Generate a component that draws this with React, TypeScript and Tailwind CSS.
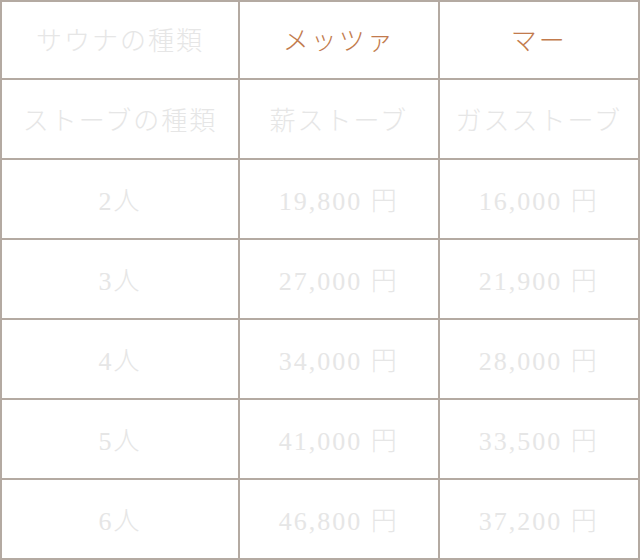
const rows: [string, string, string][] = [
  ["ストーブの種類", "薪ストーブ", "ガスストーブ"],
  ["2人", "19,800 円", "16,000 円"],
  ["3人", "27,000 円", "21,900 円"],
  ["4人", "34,000 円", "28,000 円"],
  ["5人", "41,000 円", "33,500 円"],
  ["6人", "46,800 円", "37,200 円"],
];

const cell = "border-2 border-[#b4aaa2] text-center align-middle";

export default function App() {
  return (
    <div className="w-[640px] h-[560px] bg-white">
      <table
        className="w-[640px] border-collapse text-[26px] font-light tracking-[2px] text-[#e6e6e6]"
        style={{ fontFamily: '"Liberation Serif", "Noto Sans CJK JP", serif' }}
      >
        <colgroup>
          <col className="w-[239px]" />
          <col className="w-[200px]" />
          <col className="w-[201px]" />
        </colgroup>
        <thead>
          <tr className="h-[78px]">
            <th className={`${cell} pt-[2px] font-light`}>サウナの種類</th>
            <th className={`${cell} pt-[2px] font-light text-[#c27b4d]`}>メッツァ</th>
            <th className={`${cell} pt-[2px] font-light text-[#c27b4d]`}>マー</th>
          </tr>
        </thead>
        <tbody>
          {rows.map((r) => (
            <tr key={r[0]} className="h-[80px]">
              <td className={`${cell} pt-[4px]`}>{r[0]}</td>
              <td className={`${cell} pt-[4px]`}>{r[1]}</td>
              <td className={`${cell} pt-[4px]`}>{r[2]}</td>
            </tr>
          ))}
        </tbody>
      </table>
    </div>
  );
}
